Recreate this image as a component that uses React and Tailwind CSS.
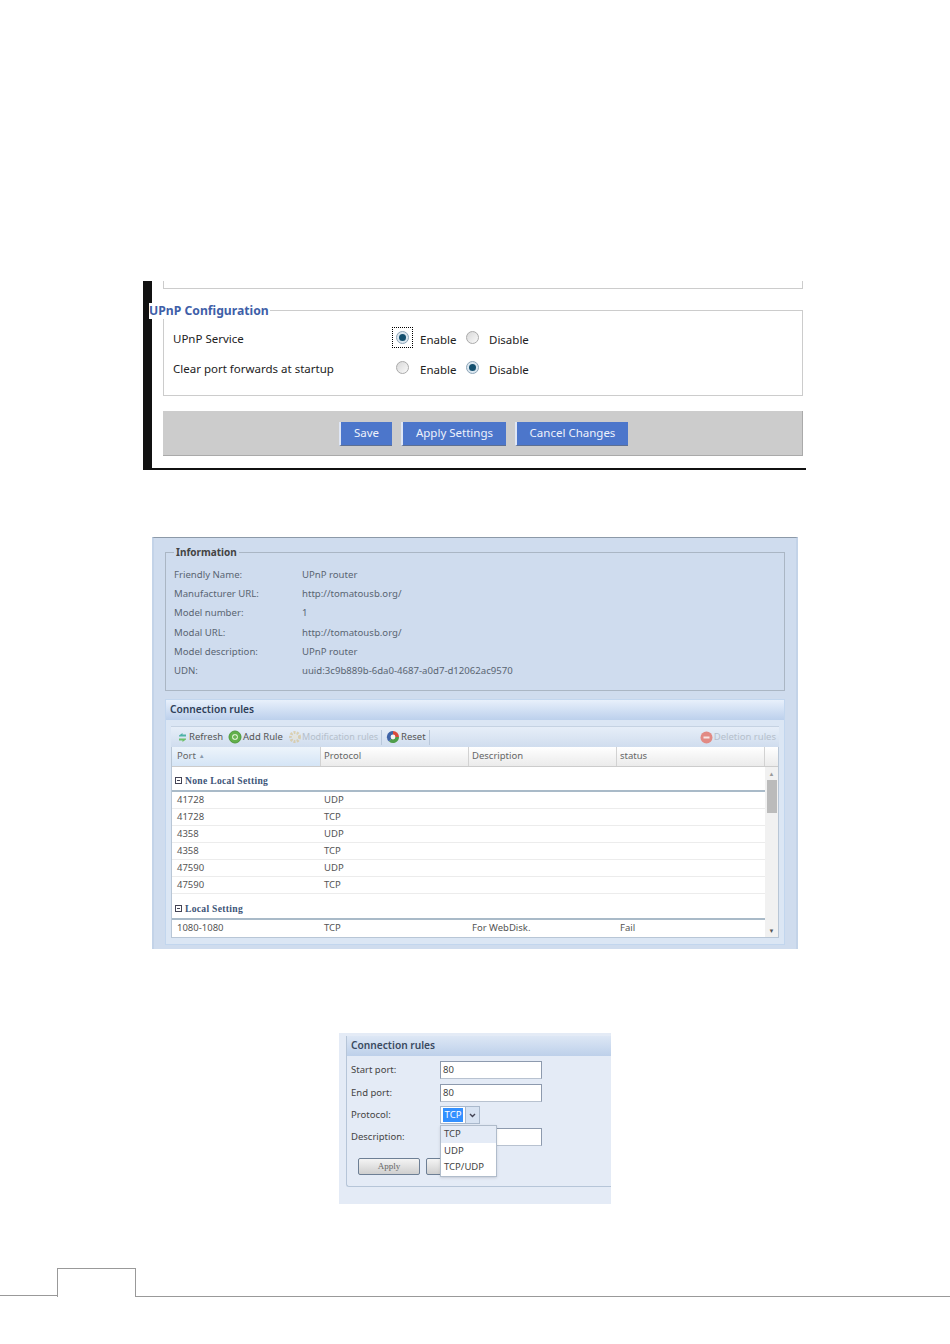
import React from "react";

const font = "font-['Noto_Sans',sans-serif]";

function Radio({ checked, focus }) {
  return (
    <span className={`flex h-[21px] w-[21px] -translate-y-[2px] items-center justify-center ${focus ? "border border-dotted border-black" : ""}`}>
      <span className={`flex h-[13px] w-[13px] items-center justify-center rounded-full border ${checked ? "border-[#8fa6b8] bg-[#dbe7f0]" : "border-[#aaa] bg-gradient-to-br from-[#d8d8d8] to-[#fafafa]"}`}>
        {checked && <span className="h-[7px] w-[7px] rounded-full bg-[#14506f]" />}
      </span>
    </span>
  );
}

function RadioRow({ label, first }) {
  return (
    <div className="grid h-[30px] grid-cols-[219px_21px_7px_36px_6px_21px_6px_1fr] items-center whitespace-nowrap text-[11.5px] text-[#222]">
      <span>{label}</span>
      <Radio checked={first} focus={first} />
      <span />
      <span className="translate-y-px">Enable</span>
      <span />
      <Radio checked={!first} />
      <span />
      <span className="translate-y-px">Disable</span>
    </div>
  );
}

function BlueButton({ children, w }) {
  return (
    <button className={`h-[24px] ${w} border-l-2 border-b border-l-[#dfe6f5] border-b-[#5d6f92] bg-[#4c76cb] text-[11.5px] text-[#eef2fb]`}>
      {children}
    </button>
  );
}

function RefreshIcon() {
  return (
    <svg width="13" height="13" viewBox="0 0 13 13">
      <path d="M3 4.5 L6.5 2 L6.5 3.5 L10 3.5 L10 5.5 L3 5.5 Z" fill="#4fb3a8" />
      <path d="M10 8.5 L6.5 11 L6.5 9.5 L3 9.5 L3 7.5 L10 7.5 Z" fill="#6ec06a" />
    </svg>
  );
}

function AddIcon() {
  return (
    <svg width="14" height="14" viewBox="0 0 14 14">
      <circle cx="7" cy="7" r="6" fill="#62b04a" stroke="#4f9a3b" />
      <circle cx="7" cy="7" r="3" fill="#d6ecc6" />
      <path d="M5 7 H9 M7 5 V9" stroke="#62b04a" strokeWidth="1.3" />
    </svg>
  );
}

function GearIcon() {
  return (
    <svg width="14" height="14" viewBox="0 0 14 14" opacity="0.55">
      <circle cx="7" cy="7" r="4.5" fill="none" stroke="#d9bd7c" strokeWidth="3" strokeDasharray="2 1.2" />
      <circle cx="7" cy="7" r="2.5" fill="#ece3cb" />
    </svg>
  );
}

function ResetIcon() {
  return (
    <svg width="14" height="14" viewBox="0 0 14 14">
      <path d="M7 7 L7 1 A6 6 0 0 1 13 7 Z" fill="#d94a3c" />
      <path d="M7 7 L13 7 A6 6 0 0 1 3 11.5 Z" fill="#4f9e4a" />
      <path d="M7 7 L3 11.5 A6 6 0 0 1 7 1 Z" fill="#3f64a8" />
      <circle cx="7" cy="7" r="2.4" fill="#f4f4f4" />
    </svg>
  );
}

function DeleteIcon() {
  return (
    <svg width="13" height="13" viewBox="0 0 13 13">
      <circle cx="6.5" cy="6.5" r="6" fill="#e28a84" />
      <path d="M3.5 6.5 H9.5" stroke="#f8e6e4" strokeWidth="2" />
    </svg>
  );
}

function ToolSep({ className }) {
  return <span className={`h-[15px] w-px bg-[#b9c8db] ${className}`} />;
}

function GroupHead({ label, h }) {
  return (
    <div className={`flex ${h} items-end border-b-2 border-[#a9bac8] pb-[3px] pl-[3px]`}>
      <span className="mb-[3px] mr-[3px] flex h-[7px] w-[7px] items-center justify-center border border-[#445]">
        <span className="h-px w-[3px] bg-[#445]" />
      </span>
      <span className="font-['Liberation_Serif',serif] text-[9.6px] font-bold leading-[12px] tracking-[0.3px] text-[#3d5578]">{label}</span>
    </div>
  );
}

const rules = [
  ["41728", "UDP"],
  ["41728", "TCP"],
  ["4358", "UDP"],
  ["4358", "TCP"],
  ["47590", "UDP"],
  ["47590", "TCP"],
];

function RuleRow({ port, protocol, description, status, last }) {
  return (
    <div className={`grid h-[17px] grid-cols-[149px_148px_148px_1fr] items-center text-[9.5px] text-[#555] ${last ? "" : "border-b border-[#ececec]"}`}>
      <span className="pl-[5px]">{port}</span>
      <span className="pl-[3px]">{protocol}</span>
      <span className="pl-[3px]">{description}</span>
      <span className="pl-[3px]">{status}</span>
    </div>
  );
}

const info = [
  ["Friendly Name:", "UPnP router"],
  ["Manufacturer URL:", "http://tomatousb.org/"],
  ["Model number:", "1"],
  ["Modal URL:", "http://tomatousb.org/"],
  ["Model description:", "UPnP router"],
  ["UDN:", "uuid:3c9b889b-6da0-4687-a0d7-d12062ac9570"],
];

function FormRow({ label, children, className }) {
  return (
    <div className={`grid grid-cols-[89px_1fr] items-center text-[9.5px] text-[#444] ${className}`}>
      <span>{label}</span>
      {children}
    </div>
  );
}

function TextInput({ value }) {
  return (
    <div className="flex h-[18px] w-[102px] items-center border border-[#8d9aae] border-b-[#b8c2d0] bg-white pl-[2px] text-[9.5px] text-[#444]">
      {value}
    </div>
  );
}

export default function App() {
  return (
    <div className={`relative h-[1344px] w-[950px] overflow-hidden bg-white pt-[281px] ${font}`}>
      {/* UPnP configuration */}
      <section className="ml-[143px] h-[189px] w-[663px] border-b-2 border-l-[9px] border-[#111] pl-[11px] pr-[3px]">
        <div className="h-[8px] border-x border-b border-[#ccc]" />
        <div className="relative mt-[21px] h-[86px] border border-[#ccc] pl-[9px] pt-[13px]">
          <span className="absolute left-[-15px] top-[-8px] whitespace-nowrap bg-white pr-[1px] text-[12.2px] font-bold leading-[16px] text-[#3f5fa8]">
            UPnP Configuration
          </span>
          <RadioRow label="UPnP Service" first />
          <RadioRow label="Clear port forwards at startup" />
        </div>
        <div className="mt-[15px] flex h-[45px] items-center justify-center gap-[9px] border-b border-r border-[#aaa] bg-[#cccccc] pl-[2px] pt-[1px]">
          <BlueButton w="w-[53px]">Save</BlueButton>
          <BlueButton w="w-[105px]">Apply Settings</BlueButton>
          <BlueButton w="w-[113px]">Cancel Changes</BlueButton>
        </div>
      </section>

      {/* Information and rule list */}
      <section className="ml-[152px] mt-[67px] h-[412px] w-[646px] border-t border-[#8c99a8] border-x-[2px] border-x-[#c3d3e8] bg-[#cfdcee] pl-[11px] pr-[11px] pt-[14px]">
        <div className="relative h-[139px] border border-[#aab6c4] pl-[8px] pt-[12px]">
          <span className="absolute left-[8px] top-[-8px] bg-[#cfdcee] px-[2px] text-[10px] font-bold leading-[15px] text-[#444]">
            Information
          </span>
          {info.map(([k, v]) => (
            <div key={k} className="grid h-[19.4px] grid-cols-[128px_1fr] items-center text-[9.6px] text-[#5a6572]">
              <span>{k}</span>
              <span>{v}</span>
            </div>
          ))}
        </div>

        <div className="mt-[8px] h-[246px] border border-[#c2d6ee] bg-[#dbe6f4] px-[5px]">
          <div className="-mx-[5px] flex h-[20px] items-center bg-gradient-to-b from-[#e8f0fb] to-[#bcd0ec] pl-[4px] text-[10.2px] font-semibold text-[#2f4058]">
            Connection rules
          </div>
          <div className="mt-[6px] flex h-[21px] items-center border-t border-[#c5d2e2] bg-gradient-to-b from-[#e6eef8] to-[#d0ddee] pl-[5px] pr-[3px] text-[9.5px] text-[#555]">
            <RefreshIcon />
            <span className="w-[39px]">Refresh</span>
            <AddIcon />
            <span className="ml-px w-[45px]">Add Rule</span>
            <GearIcon />
            <span className="w-[77px] whitespace-nowrap text-[9px] text-[#b5bfcb]">Modification rules</span>
            <ToolSep className="ml-[2px] mr-[4px]" />
            <ResetIcon />
            <span className="ml-[1px] w-[28px]">Reset</span>
            <ToolSep />
            <span className="flex-1" />
            <DeleteIcon />
            <span className="ml-[1px] text-[#b5bfcb]">Deletion rules</span>
          </div>

          <div className="border border-t-0 border-[#b8c6d6] bg-white">
            <div className="grid h-[20px] grid-cols-[149px_148px_148px_148px_1fr] items-center border-b border-[#ccc] text-[9.5px] text-[#666]">
              <span className="flex h-full items-center gap-[3px] border-r border-[#d2d2d2] bg-gradient-to-b from-[#edf4fb] to-[#d5e5f6] pl-[5px]">
                Port <span className="text-[6px] text-[#8a9aac]">▲</span>
              </span>
              <span className="flex h-full items-center border-r border-[#d2d2d2] bg-gradient-to-b from-white to-[#ebebeb] pl-[3px]">Protocol</span>
              <span className="flex h-full items-center border-r border-[#d2d2d2] bg-gradient-to-b from-white to-[#ebebeb] pl-[3px]">Description</span>
              <span className="flex h-full items-center border-r border-[#d2d2d2] bg-gradient-to-b from-white to-[#ebebeb] pl-[3px]">status</span>
              <span className="h-full bg-gradient-to-b from-white to-[#ebebeb]" />
            </div>
            <div className="flex">
              <div className="w-[593px]">
                <GroupHead label="None Local Setting" h="h-[25px]" />
                {rules.map(([port, protocol], i) => (
                  <RuleRow key={i} port={port} protocol={protocol} />
                ))}
                <GroupHead label="Local Setting" h="h-[26px]" />
                <RuleRow port="1080-1080" protocol="TCP" description="For WebDisk." status="Fail" last />
              </div>
              <div className="flex flex-1 flex-col items-center bg-[#f1f1f1] pt-[3px]">
                <span className="text-[6px] leading-[8px] text-[#999]">▲</span>
                <span className="mt-[2px] h-[33px] w-[10px] bg-[#bbb]" />
                <span className="mt-auto pb-[2px] text-[6px] leading-[8px] text-[#555]">▼</span>
              </div>
            </div>
          </div>
        </div>
      </section>

      {/* Add rule form */}
      <section className="ml-[339px] mt-[84px] h-[171px] w-[272px] bg-[#e4ebf6] pl-[7px] pt-[3px]">
        <div className="h-[151px] rounded-bl-[3px] border-b border-l border-[#b6c5d8] pl-[4px]">
          <div className="-ml-[4px] flex h-[20px] items-center bg-gradient-to-b from-[#dde7f5] to-[#bdd0ea] pl-[4px] text-[10.2px] font-semibold text-[#3a4a60]">
            Connection rules
          </div>
          <FormRow label="Start port:" className="mt-[5px]"><TextInput value="80" /></FormRow>
          <FormRow label="End port:" className="mt-[5px]"><TextInput value="80" /></FormRow>
          <FormRow label="Protocol:" className="relative mt-[4px]">
            <div className="flex h-[18px] w-[40px] items-center border border-[#aab9cc] bg-white">
              <span className="ml-[2px] w-[20px] bg-[#3390ff] text-center text-[9.5px] leading-[14px] text-white">TCP</span>
              <span className="ml-auto flex h-full w-[14px] items-center justify-center border-l border-[#aab9cc] bg-[#d8e3f2]">
                <svg width="7" height="5" viewBox="0 0 7 5"><path d="M1 1 L3.5 3.5 L6 1" fill="none" stroke="#445" strokeWidth="1.4" /></svg>
              </span>
            </div>
            <div className="absolute left-[89px] top-[19px] z-10 w-[57px] border border-[#b0bccb] bg-white text-[9.5px] text-[#444] shadow-sm">
              <div className="flex h-[17px] items-center bg-[#e4ebf6] pl-[3px]">TCP</div>
              <div className="flex h-[16px] items-center pl-[3px]">UDP</div>
              <div className="flex h-[17px] items-center pl-[3px]">TCP/UDP</div>
            </div>
          </FormRow>
          <FormRow label="Description:" className="mt-[4px]"><TextInput /></FormRow>
          <div className="ml-[7px] mt-[12px] flex gap-[6px]">
            <button className="h-[17px] w-[62px] rounded-[2px] border border-[#6d7f95] bg-gradient-to-b from-[#f4f4f4] to-[#cfcfcf] font-['Liberation_Serif',serif] text-[9px] text-[#666]">Apply</button>
            <button className="h-[17px] w-[62px] rounded-[2px] border border-[#6d7f95] bg-gradient-to-b from-[#f4f4f4] to-[#cfcfcf]" />
          </div>
        </div>
      </section>

      {/* page number tab */}
      <footer className="mt-[64px] flex h-[29px] items-end">
        <div className="mb-px w-[57px] border-b border-[#999]" />
        <div className="h-[29px] w-[79px] border-x border-t border-[#999]" />
        <div className="flex-1 border-b border-[#999]" />
      </footer>
    </div>
  );
}
